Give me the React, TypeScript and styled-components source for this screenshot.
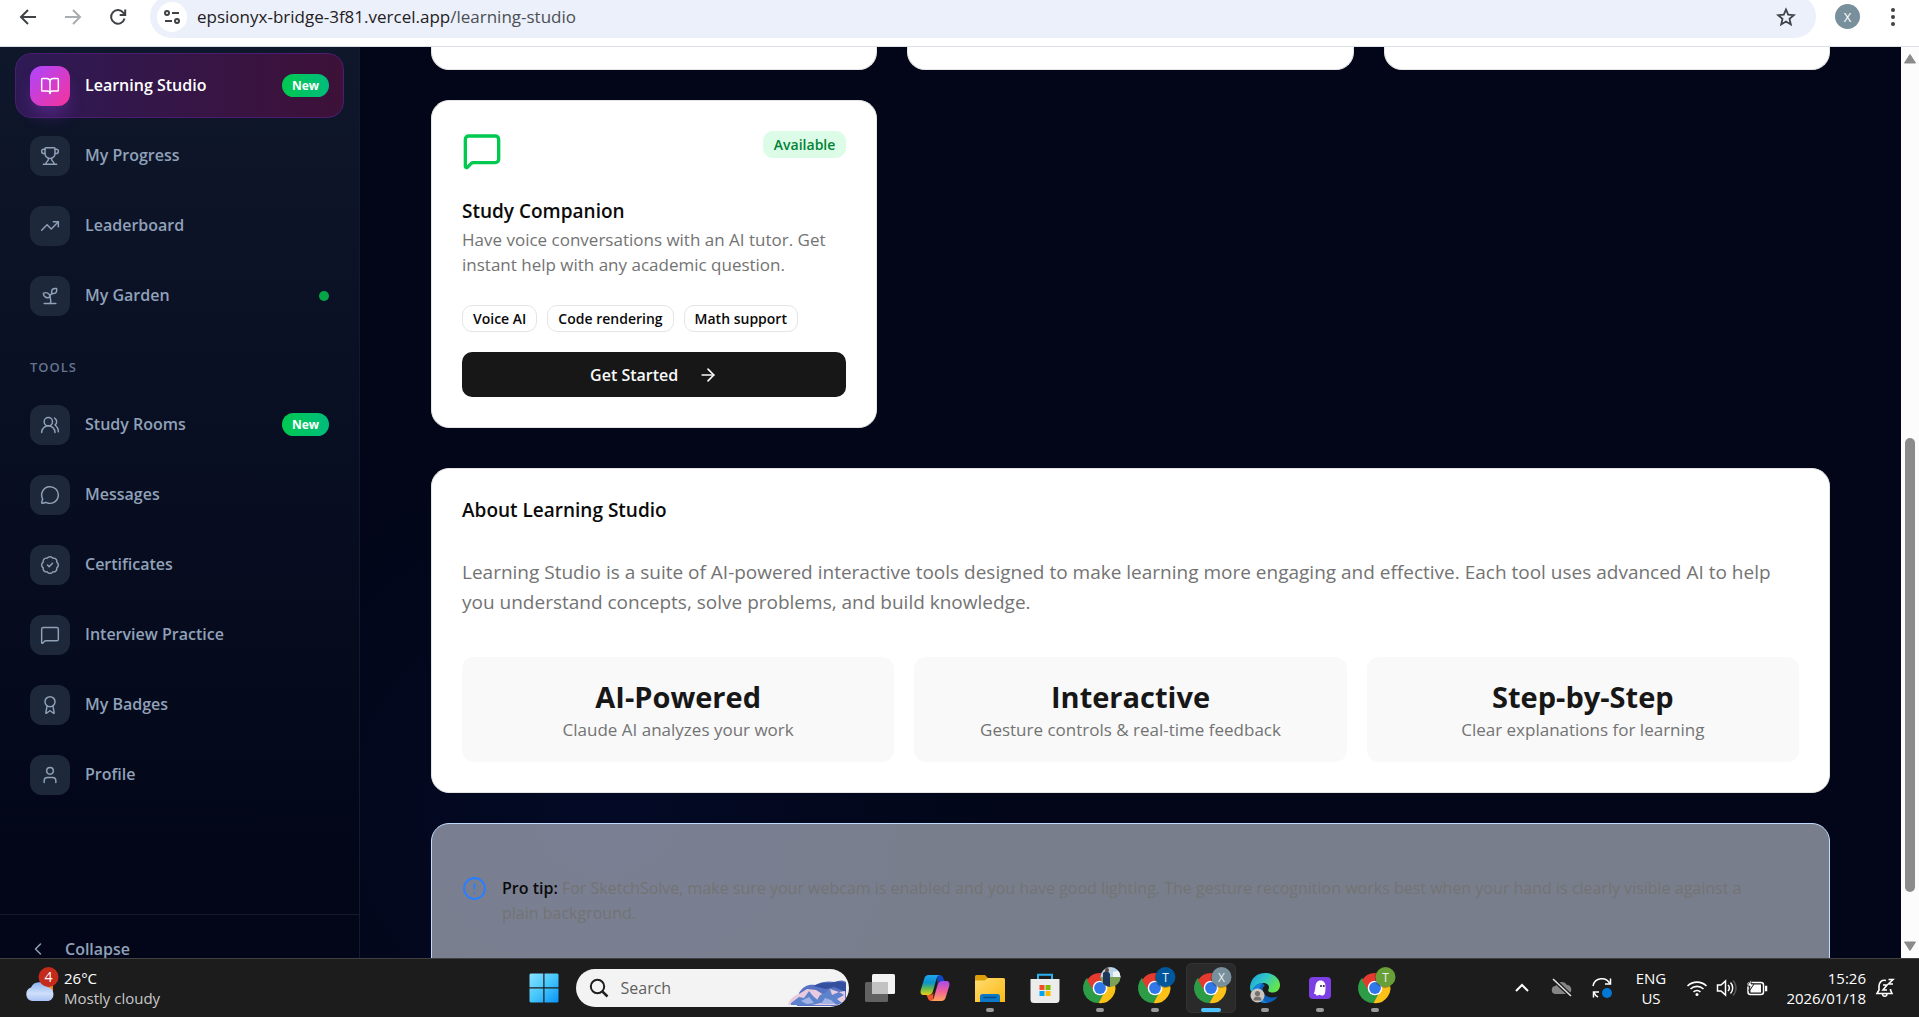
import React from "react";
import styled, { createGlobalStyle, css } from "styled-components";
import {
  ArrowRight,
  Award,
  BadgeCheck,
  BookOpen,
  ChevronLeft,
  CircleAlert,
  MessageCircle,
  MessageSquare,
  Sprout,
  TrendingUp,
  Trophy,
  User,
  UsersRound,
} from "lucide-react";

const GlobalStyle = createGlobalStyle`
  *, *::before, *::after { box-sizing: border-box; }
  body {
    margin: 0;
    font-family: "Segoe UI", "Open Sans", "Noto Sans", sans-serif;
    background: #020618;
  }
  button, input { font-family: inherit; }
  h2, h3, p, ul { margin: 0; padding: 0; }
  button { border: 0; padding: 0; background: none; color: inherit; cursor: pointer; }
`;

const Screen = styled.div`
  display: grid;
  grid-template-rows: auto minmax(0, 1fr) auto;
  height: 100vh;
  overflow: hidden;
`;

/* ---------- browser toolbar ---------- */

const Toolbar = styled.header`
  display: flex;
  align-items: flex-start;
  height: 47px;
  padding: 0 4px 0 14px;
  background: #fff;
  border-bottom: 1px solid #dcdfe3;
  overflow: hidden;
`;

const ToolbarButton = styled.button<{ $muted?: boolean }>`
  display: grid;
  place-items: center;
  flex: none;
  width: 45px;
  height: 33px;
  color: ${(p) => (p.$muted ? "#a9acb0" : "#3f4246")};
`;

const NavButtons = styled.div`
  display: flex;
  flex: none;
  width: 136px;
  margin-left: -9px;
`;

const Omnibox = styled.div`
  display: flex;
  align-items: center;
  flex: 1;
  height: 43px;
  margin: -5px 9px 0;
  padding: 0 14px 0 7px;
  border-radius: 22px;
  background: #ebf0fa;
`;

const SiteInfo = styled.button`
  display: grid;
  place-items: center;
  flex: none;
  width: 30px;
  height: 30px;
  border-radius: 50%;
  background: #fff;
  color: #3f4246;
`;

const Address = styled.p`
  flex: 1;
  margin-left: 10px;
  font-size: 17px;
  line-height: 24px;
  color: #1f2023;
  span { color: #4c4f54; }
`;

const StarButton = styled.button`
  display: grid;
  place-items: center;
  width: 32px;
  height: 32px;
  color: #3f4246;
`;

const Profile = styled.button`
  display: grid;
  place-items: center;
  width: 25px;
  height: 25px;
  margin: 4px 10px 0;
  border-radius: 50%;
  background: #78909c;
  color: #fff;
  font-size: 13px;
`;

/* ---------- page ---------- */

const Page = styled.div`
  display: grid;
  grid-template-columns: 360px minmax(0, 1fr) 18px;
  min-height: 0;
  overflow: hidden;
`;

const Sidebar = styled.aside`
  display: flex;
  flex-direction: column;
  min-height: 0;
  border-right: 1px solid #131a2b;
  background: linear-gradient(180deg, #0f172b 0%, #020618 90%);
`;

const Nav = styled.nav`
  flex: 1;
  min-height: 0;
  padding: 6px 15px 0;
`;

const NavList = styled.ul`
  display: flex;
  flex-direction: column;
  gap: 5px;
  list-style: none;
`;

const NavTile = styled.span<{ $active?: boolean }>`
  display: grid;
  place-items: center;
  flex: none;
  width: 40px;
  height: 40px;
  border-radius: 12px;
  background: #1d293b;
  ${(p) =>
    p.$active &&
    css`
      background: linear-gradient(135deg, #ad46ff, #f6339a);
      color: #fff;
      box-shadow: 0 12px 18px -4px rgba(173, 70, 255, 0.3);
    `}
`;

const NavLink = styled.a<{ $active?: boolean }>`
  display: flex;
  align-items: center;
  gap: 15px;
  height: 65px;
  padding: 0 14px;
  border: 1px solid transparent;
  border-radius: 16px;
  color: #90a1b9;
  font-size: 16px;
  font-weight: 600;
  line-height: 25px;
  text-decoration: none;
  ${(p) =>
    p.$active &&
    css`
      color: #fff;
      border-color: #4b1c6f;
      background: linear-gradient(90deg, #2e1a55, #3d1138);
    `}
`;

const NavLabel = styled.span`
  flex: 1;
`;

const NewBadge = styled.span`
  padding: 0 10px;
  border-radius: 12px;
  background: linear-gradient(90deg, #00c950, #00bc7d);
  color: #fff;
  font-size: 12px;
  font-weight: 700;
  line-height: 23px;
`;

const StatusDot = styled.span`
  width: 10px;
  height: 10px;
  border-radius: 50%;
  background: #06a548;
`;

const SectionLabel = styled.h2`
  padding: 29px 15px 15px;
  color: #62748e;
  font-size: 13px;
  font-weight: 600;
  line-height: 20px;
  letter-spacing: 1px;
`;

const SidebarFooter = styled.div`
  flex: none;
  height: 44px;
  padding: 14px 15px 0;
  border-top: 1px solid #131a2b;
  overflow: hidden;
`;

const CollapseButton = styled.button`
  display: flex;
  align-items: center;
  gap: 17px;
  height: 40px;
  padding-left: 13px;
  color: #90a1b9;
  font-size: 16px;
  font-weight: 600;
`;

const Main = styled.main`
  display: flex;
  flex-direction: column;
  min-height: 0;
  overflow: hidden;
  padding: 0 71px;
  background: radial-gradient(ellipse 400px 360px at 16% 84%, #040a26, #020618 100%);
`;

const CardGrid = styled.section`
  display: grid;
  flex: none;
  grid-template-columns: repeat(3, minmax(0, 1fr));
  gap: 30px;
`;

const CardEnd = styled.div`
  height: 23px;
  border: 1px solid #e5e5e5;
  border-top: 0;
  border-radius: 0 0 18px 18px;
  background: #fff;
`;

const Card = styled.article`
  flex: none;
  padding: 30px;
  border: 1px solid #e5e5e5;
  border-radius: 18px;
  background: #fff;
  color: #0a0a0a;
`;

const CardTop = styled.div`
  display: flex;
  align-items: flex-start;
  justify-content: space-between;
  margin-bottom: 29px;
  color: #00c950;
`;

const Badge = styled.span<{ $outline?: boolean }>`
  padding: 0 10px;
  border: 1px solid ${(p) => (p.$outline ? "#e5e5e5" : "#dcfce7")};
  border-radius: 10px;
  background: ${(p) => (p.$outline ? "#fff" : "#dcfce7")};
  color: ${(p) => (p.$outline ? "#0a0a0a" : "#008236")};
  font-size: 14px;
  font-weight: 600;
  line-height: 25px;
`;

const CardTitle = styled.h3`
  font-size: 19px;
  font-weight: 600;
  line-height: 22px;
`;

const CardText = styled.p`
  margin: 5px 0 28px;
  color: #737373;
  font-size: 17px;
  line-height: 25px;
`;

const TagRow = styled.div`
  display: flex;
  gap: 10px;
  margin-bottom: 20px;
`;

const PrimaryButton = styled.button`
  display: flex;
  align-items: center;
  justify-content: center;
  gap: 20px;
  width: 100%;
  height: 45px;
  border-radius: 10px;
  background: #171717;
  color: #fafafa;
  font-size: 16px;
  font-weight: 600;
`;

const About = styled(Card)`
  margin-top: 40px;
`;

const AboutText = styled.p`
  margin: 36px 0 40px;
  color: #737373;
  font-size: 19px;
  line-height: 30px;
`;

const FeatureGrid = styled.div`
  display: grid;
  grid-template-columns: repeat(3, minmax(0, 1fr));
  gap: 20px;
`;

const Feature = styled.div`
  padding: 20px;
  border-radius: 12px;
  background: #f9f9f9;
  text-align: center;
  h3 { color: #171717; font-size: 29px; font-weight: 700; line-height: 40px; }
  p { color: #737373; font-size: 17px; line-height: 25px; }
`;

const Tip = styled(Card)`
  display: flex;
  gap: 15px;
  height: 220px;
  margin-top: 30px;
  padding: 52px 60px 30px 30px;
  border-color: #bedbff;
  background: rgba(239, 246, 255, 0.5);
  svg { flex: none; color: #2b7fff; }
  p { color: #737373; font-size: 16px; line-height: 25px; }
  strong { color: #0a0a0a; font-weight: 600; }
`;

/* ---------- scrollbar ---------- */

const Scrollbar = styled.div`
  display: grid;
  grid-template-rows: 24px 367fr 454fr 42fr 24px;
  justify-items: center;
  background: #fcfcfc;
`;

const ScrollThumb = styled.div`
  grid-row: 3;
  width: 10px;
  border-radius: 5px;
  background: #8b8b8b;
`;

const ScrollArrow = styled.svg<{ $row: number }>`
  grid-row: ${(p) => p.$row};
  align-self: center;
`;

/* ---------- taskbar ---------- */

const Taskbar = styled.footer`
  display: grid;
  grid-template-columns: 1fr auto 1fr;
  align-items: stretch;
  height: 59px;
  border-top: 1px solid #404040;
  background: #1c1c1c;
  color: #fff;
`;

const Weather = styled.button`
  display: flex;
  align-items: center;
  justify-self: start;
  gap: 5px;
  padding-left: 23px;
  font-size: 15px;
  line-height: 20px;
  text-align: left;
  small { display: block; font-size: 15px; color: #c8c8c8; }
`;

const TaskCenter = styled.div`
  display: flex;
  align-items: center;
`;

const SearchBox = styled.label`
  display: flex;
  align-items: center;
  width: 273px;
  height: 38px;
  margin: 0 4px;
  padding: 0 2px 0 13px;
  border-radius: 19px;
  background: #f3f3f3;
  overflow: hidden;
  svg { flex: none; }
`;

const SearchInput = styled.input`
  flex: 1;
  min-width: 0;
  margin-left: 12px;
  padding: 0;
  border: 0;
  outline: 0;
  background: transparent;
  font-size: 16px;
  &::placeholder { color: #5f5f5f; opacity: 1; }
`;

const AppCell = styled.button<{ $active?: boolean }>`
  display: grid;
  grid-template-rows: 41px 4px;
  justify-items: center;
  align-items: center;
  width: ${(p) => (p.$active ? "50px" : "55px")};
  height: 50px;
  margin: ${(p) => (p.$active ? "0 2px 0 3px" : "0")};
  padding-top: 4px;
  border-radius: 6px;
  background: ${(p) => (p.$active ? "#2a2a2a" : "transparent")};
  box-shadow: ${(p) => (p.$active ? "inset 0 0 0 1px #333" : "none")};
`;

const Running = styled.span<{ $active?: boolean }>`
  width: ${(p) => (p.$active ? "20px" : "8px")};
  height: 4px;
  border-radius: 2px;
  background: ${(p) => (p.$active ? "#4cc2ff" : "#9a9a9a")};
`;

const Tray = styled.div`
  display: flex;
  align-items: center;
  justify-self: end;
  padding-right: 22px;
  font-size: 15px;
  line-height: 20px;
`;

const TrayButton = styled.button<{ $w: number }>`
  display: grid;
  place-items: center;
  width: ${(p) => p.$w}px;
  height: 48px;
`;

const Language = styled.div`
  width: 58px;
  text-align: center;
`;

const Clock = styled.div`
  width: 92px;
  margin-right: 6px;
  text-align: right;
`;

/* ---------- drawings ---------- */

const Chrome = ({ id, letter, color, photo }: { id: string; letter?: string; color?: string; photo?: boolean }) => (
  <svg width="42" height="42" viewBox="0 5 42 42">
    <path d="M8 15.8A15 15 0 0 0 19.5 41L27 30l-6-3.5-7.5-1z" fill="#2c9c47" />
    <path d="M34.4 18.8A15 15 0 0 1 19.5 41l7.5-13.5-1-8.7z" fill="#fcc116" />
    <path d="M8.1 18.3A15 15 0 0 1 34.1 18.8H21l-7 9z" fill="#e53a30" />
    <circle cx="21" cy="26" r="7.3" fill="#fff" />
    <circle cx="21" cy="26" r="5.9" fill="#3077ea" />
    {photo ? (
      <>
        <clipPath id={id}><circle cx="31.5" cy="15" r="10" /></clipPath>
        <g clipPath={`url(#${id})`}>
          <path d="M20 4h24v12H20z" fill="#b9d4e8" />
          <path d="M20 15h24v12H20z" fill="#7ba057" />
          <path d="M24 11l4-3 3 4 0 14h-7z" fill="#1e3658" />
          <circle cx="28" cy="8" r="2" fill="#6b4330" />
          <path d="M34 10l8-2v7h-8z" fill="#eef4f8" />
        </g>
      </>
    ) : (
      <>
        <circle cx="31" cy="15.7" r="10.3" fill="#1c1c1c" opacity=".35" />
        <circle cx="31.5" cy="15" r="10" fill={color} />
        <text x="31.5" y="19.5" fontSize="12" textAnchor="middle" fill="#e8eef2">{letter}</text>
      </>
    )}
  </svg>
);

const WindowsLogo = () => (
  <svg width="30" height="30" viewBox="0 0 30 30">
    <defs>
      <linearGradient id="win" x1="0" y1="0" x2="1" y2="1">
        <stop offset="0" stopColor="#8be2ff" />
        <stop offset=".5" stopColor="#45c6fb" />
        <stop offset="1" stopColor="#0a93f8" />
      </linearGradient>
    </defs>
    <path d="M1.5 .5H14.300V14.300H.5V1.500zM15.500 .5H28.500L29.500 1.500V14.300H15.500zM.5 15.500H14.300V29.500H1.500L.5 28.500zM15.500 15.500H29.500V28.500L28.500 29.500H15.500z" fill="url(#win)" />
  </svg>
);

const SearchArt = () => (
  <svg width="60" height="38" viewBox="0 0 60 38">
    <path d="M12 24C16 17 22 15 28 16c7-4 15-4 20-3 4-2 8-2 11 0v19l-6 5H10z" fill="#5873c4" />
    <path d="M26 17c6-3 12-4 17-3 5-2 10-2 16 0v9l-12-5-8 2z" fill="#334f9e" />
    <path d="M1 36c1-5 5-9 11-11l8-5 9 1 8 5 6-6 9 3 6-1v9l-5 5z" fill="#e9cbe0" />
    <path d="M4 34l8-6 5 1 5-7 4 5 8 7-9 2H4zM33 26l5-2 5-4 2 6 7-3 5 3-7 4 5 4-5 2-8-5-8 3-4-3z" fill="#5d83cc" />
    <path d="M14 32l8-4 5 6-7 1zM38 29l6 2 4 4H34z" fill="#a5b4e6" />
  </svg>
);

const TaskView = () => (
  <svg width="30" height="30" viewBox="0 0 30 30">
    <rect x="0" y="9" width="23" height="20" rx="1.500" fill="#626262" />
    <rect x="7" y="1" width="23" height="20" rx="1.500" fill="#f3f3f3" />
    <path d="M7 9h16v12H8.500A1.500 1.500 0 0 1 7 19.500z" fill="#c2c2c2" />
  </svg>
);

const Copilot = () => (
  <svg width="30" height="30" viewBox="0 0 30 30">
    <defs>
      <linearGradient id="cpA" x1="0" y1="0" x2="0" y2="1">
        <stop offset="0" stopColor="#1ea5ee" />
        <stop offset=".4" stopColor="#0c93c9" />
        <stop offset=".7" stopColor="#67bd4a" />
        <stop offset="1" stopColor="#f0cb1a" />
      </linearGradient>
      <linearGradient id="cpB" x1="0" y1="0" x2="0" y2="1">
        <stop offset="0" stopColor="#a64bf0" />
        <stop offset=".5" stopColor="#f0609a" />
        <stop offset="1" stopColor="#ffa25c" />
      </linearGradient>
    </defs>
    <path d="M17 2h3c1.500 0 2.500 1 3 2.500L24.500 8H21c-2 0-3 1-3.500 3z" fill="#1246c4" />
    <path d="M13 28h-2c-1.500 0-2.500-1-3-2.500L6.500 22H10c2 0 3-1 3.500-3z" fill="#f2562d" />
    <path d="M8.500 2H20c-2 0-2.800 1.500-3.400 3.500L13 18c-.8 2.700-2 4-4.500 4H4c-3 0-4-2-3.200-5L4.300 5.500C5 3.200 6.300 2 8.500 2z" fill="url(#cpA)" />
    <path d="M21.500 28H10.500c2 0 2.800-1.500 3.400-3.500L17.500 12c.8-2.700 2-4 4.500-4h4c3 0 4 2 3.200 5l-3.500 11.500c-.7 2.300-2 3.500-4.200 3.500z" fill="url(#cpB)" />
  </svg>
);

const Explorer = () => (
  <svg width="30" height="30" viewBox="0 0 30 30">
    <defs>
      <linearGradient id="fold" x1="0" y1="0" x2="1" y2="1">
        <stop offset="0" stopColor="#ffdd72" />
        <stop offset="1" stopColor="#fcb813" />
      </linearGradient>
    </defs>
    <path d="M0 3.500A1.500 1.500 0 0 1 1.500 2H10l3 3H29v8H0z" fill="#dd9f07" />
    <path d="M0 7.500h9.500L13 5h15.500A1.500 1.500 0 0 1 30 6.500V29H0z" fill="url(#fold)" />
    <path d="M5 29v-5.500A2.500 2.500 0 0 1 7.500 21h15a2.500 2.500 0 0 1 2.500 2.500V29z" fill="#0b78c8" />
    <path d="M8.500 24.500h13" stroke="#064b86" strokeWidth="1.500" />
  </svg>
);

const Store = () => (
  <svg width="30" height="30" viewBox="0 0 30 30">
    <path d="M8 7V1.800h14V7" fill="none" stroke="#2bb2ee" strokeWidth="2" />
    <path d="M0.500 6h29v20.500a3.500 3.500 0 0 1-3.500 3.500H4A3.500 3.500 0 0 1 .5 26.500z" fill="#ececec" />
    <path d="M9.500 12h5v5h-5z" fill="#f25022" />
    <path d="M15.500 12h5v5h-5z" fill="#7fba00" />
    <path d="M9.500 18h5v5h-5z" fill="#00a4ef" />
    <path d="M15.500 18h5v5h-5z" fill="#ffb900" />
  </svg>
);

const Edge = () => (
  <svg width="30" height="30" viewBox="0 0 30 30">
    <defs>
      <linearGradient id="edA" x1="0" y1="0" x2="1" y2=".5">
        <stop offset="0" stopColor="#18a0dc" />
        <stop offset=".5" stopColor="#30c5c9" />
        <stop offset="1" stopColor="#63e44d" />
      </linearGradient>
    </defs>
    <path d="M1 12C1 20 5 29 15 30c6 0 10-2.500 12.500-6.500C22 26 15 24 13 19c-1-3 0-5 2-6.500C11 8 3 8 1 12z" fill="#0c62b8" />
    <path d="M0 14C1 5 7 0 15 0c9 0 15 6 15 12 0 5-3.500 7.500-7.500 7.500-3.500 0-5-1-4-3 1.500-4-1-6.500-5.500-6.500-6 0-10 4-11 9C.5 18 0 16 0 14z" fill="url(#edA)" />
    <path d="M2 20c1-6 5-10 11-10-3 2.500-4.500 6-3 11 1 4 4 7.500 8 8.700C9.500 31 3.500 26 2 20z" fill="#1383dc" />
    <circle cx="7.500" cy="22.500" r="7" fill="#c9c5c1" />
    <circle cx="7.500" cy="20.500" r="2.600" fill="#77726e" />
    <path d="M3.500 27.500a4 4 0 0 1 8 0z" fill="#77726e" />
  </svg>
);

const Ghost = () => (
  <svg width="24" height="24" viewBox="0 0 24 24">
    <rect x="1" y="1" width="22" height="22" rx="4" fill="#7c3fe4" />
    <path d="M6 17c1-2 1-4 1.500-7C8 6 10 4.500 12.700 4.500c3 0 4.800 2.500 4.800 6 0 4 0 9-3 9-1.500 0-1.800-.8-3-.8-1 0-1.200.8-2.500.8S7.700 18.500 7.800 18C7 18.300 5.700 18 6 17z" fill="#fff" />
    <circle cx="13" cy="10" r="1" fill="#241344" />
    <circle cx="15.800" cy="10" r="1" fill="#241344" />
  </svg>
);

const WeatherIcon = () => (
  <svg width="36" height="42" viewBox="0 0 36 42">
    <defs>
      <linearGradient id="cloud" x1="0" y1="0" x2="0" y2="1">
        <stop offset="0" stopColor="#8fb4f2" />
        <stop offset=".6" stopColor="#cfdff9" />
        <stop offset="1" stopColor="#a7c3f4" />
      </linearGradient>
    </defs>
    <path d="M17 14h13v10H17z" fill="#f6821f" />
    <path d="M9 34a7 7 0 0 1-1-13.500A9 9 0 0 1 24 20a7.200 7.200 0 0 1 1.500 14z" fill="url(#cloud)" />
    <circle cx="25.500" cy="10" r="10" fill="#c42b1c" />
    <text x="25.500" y="15" fontSize="14" textAnchor="middle" fill="#fff">4</text>
  </svg>
);

const tools = [
  { label: "Study Rooms", Icon: UsersRound, badge: true },
  { label: "Messages", Icon: MessageCircle },
  { label: "Certificates", Icon: BadgeCheck },
  { label: "Interview Practice", Icon: MessageSquare },
  { label: "My Badges", Icon: Award },
  { label: "Profile", Icon: User },
];

const learning = [
  { label: "Learning Studio", Icon: BookOpen, badge: true, active: true },
  { label: "My Progress", Icon: Trophy },
  { label: "Leaderboard", Icon: TrendingUp },
  { label: "My Garden", Icon: Sprout, dot: true },
];

type Item = { label: string; Icon: React.ElementType; badge?: boolean; active?: boolean; dot?: boolean };

const NavItems = ({ items }: { items: Item[] }) => (
  <NavList>
    {items.map(({ label, Icon, badge, active, dot }) => (
      <li key={label}>
        <NavLink href="#" $active={active}>
          <NavTile $active={active}><Icon size={20} strokeWidth={1.75} /></NavTile>
          <NavLabel>{label}</NavLabel>
          {badge && <NewBadge>New</NewBadge>}
          {dot && <StatusDot />}
        </NavLink>
      </li>
    ))}
  </NavList>
);

const features = [
  ["AI-Powered", "Claude AI analyzes your work"],
  ["Interactive", "Gesture controls & real-time feedback"],
  ["Step-by-Step", "Clear explanations for learning"],
];

export default function App() {
  return (
    <Screen>
      <GlobalStyle />
      <Toolbar>
        <NavButtons>
          <ToolbarButton aria-label="Back">
            <svg width="18" height="18" viewBox="0 0 18 18" fill="none" stroke="currentColor" strokeWidth="2"><path d="M17 9H2.500M9 2L2 9l7 7" /></svg>
          </ToolbarButton>
          <ToolbarButton aria-label="Forward" $muted>
            <svg width="18" height="18" viewBox="0 0 18 18" fill="none" stroke="currentColor" strokeWidth="2"><path d="M1 9h14.500M9 2l7 7-7 7" /></svg>
          </ToolbarButton>
          <ToolbarButton aria-label="Reload">
            <svg width="18" height="18" viewBox="0 0 18 18" fill="none" stroke="currentColor" strokeWidth="2"><path d="M15.500 10.500A6.800 6.800 0 1 1 14.500 5l1.500 2M16.200 1.500V7h-5.500" /></svg>
          </ToolbarButton>
        </NavButtons>
        <Omnibox>
          <SiteInfo aria-label="View site information">
            <svg width="18" height="18" viewBox="0 0 18 18" fill="none" stroke="currentColor" strokeWidth="2"><circle cx="4" cy="5" r="2" /><path d="M9 5h7M2 13h7" /><circle cx="14" cy="13" r="2" /></svg>
          </SiteInfo>
          <Address>epsionyx-bridge-3f81.vercel.app<span>/learning-studio</span></Address>
          <StarButton aria-label="Bookmark">
            <svg width="20" height="20" viewBox="0 0 20 20" fill="none" stroke="currentColor" strokeWidth="1.800"><path d="M10 2.500l2.200 5.200 5.600.5-4.300 3.700 1.300 5.500-4.800-2.900-4.800 2.900 1.300-5.500-4.300-3.700 5.600-.5z" /></svg>
          </StarButton>
        </Omnibox>
        <Profile>X</Profile>
        <ToolbarButton aria-label="Menu">
          <svg width="6" height="20" viewBox="0 0 6 20" fill="currentColor"><circle cx="3" cy="3" r="2" /><circle cx="3" cy="10" r="2" /><circle cx="3" cy="17" r="2" /></svg>
        </ToolbarButton>
      </Toolbar>

      <Page>
        <Sidebar>
          <Nav>
            <NavItems items={learning} />
            <SectionLabel>TOOLS</SectionLabel>
            <NavItems items={tools} />
          </Nav>
          <SidebarFooter>
            <CollapseButton><ChevronLeft size={20} strokeWidth={1.75} />Collapse</CollapseButton>
          </SidebarFooter>
        </Sidebar>

        <Main>
          <CardGrid>
            <CardEnd />
            <CardEnd />
            <CardEnd />
            <Card>
              <CardTop>
                <MessageSquare size={40} />
                <Badge>Available</Badge>
              </CardTop>
              <CardTitle>Study Companion</CardTitle>
              <CardText>Have voice conversations with an AI tutor. Get instant help with any academic question.</CardText>
              <TagRow>
                <Badge $outline>Voice AI</Badge>
                <Badge $outline>Code rendering</Badge>
                <Badge $outline>Math support</Badge>
              </TagRow>
              <PrimaryButton>Get Started<ArrowRight size={20} /></PrimaryButton>
            </Card>
          </CardGrid>

          <About>
            <CardTitle>About Learning Studio</CardTitle>
            <AboutText>
              Learning Studio is a suite of AI-powered interactive tools designed to make learning more engaging and effective. Each tool uses advanced AI to help you understand concepts, solve problems, and build knowledge.
            </AboutText>
            <FeatureGrid>
              {features.map(([title, text]) => (
                <Feature key={title}>
                  <h3>{title}</h3>
                  <p>{text}</p>
                </Feature>
              ))}
            </FeatureGrid>
          </About>

          <Tip>
            <CircleAlert size={25} />
            <p>
              <strong>Pro tip:</strong> For SketchSolve, make sure your webcam is enabled and you have good lighting. The gesture recognition works best when your hand is clearly visible against a plain background.
            </p>
          </Tip>
        </Main>

        <Scrollbar>
          <ScrollArrow $row={1} width="14" height="12" viewBox="0 0 14 12"><path d="M7 1.500L12.500 10h-11z" fill="#8b8b8b" stroke="#8b8b8b" strokeLinejoin="round" /></ScrollArrow>
          <ScrollThumb />
          <ScrollArrow $row={5} width="14" height="12" viewBox="0 0 14 12"><path d="M7 10.500L12.500 2h-11z" fill="#8b8b8b" stroke="#8b8b8b" strokeLinejoin="round" /></ScrollArrow>
        </Scrollbar>
      </Page>

      <Taskbar>
        <Weather>
          <WeatherIcon />
          <span>26°C<small>Mostly cloudy</small></span>
        </Weather>
        <TaskCenter>
          <AppCell aria-label="Start"><WindowsLogo /></AppCell>
          <SearchBox>
            <svg width="20" height="20" viewBox="0 0 20 20" fill="none" stroke="#1f1f1f" strokeWidth="2"><circle cx="8.500" cy="8.500" r="6.700" /><path d="M13.300 13.300l5.200 5.200" strokeWidth="2.500" /></svg>
            <SearchInput aria-label="Search" placeholder="Search" />
            <SearchArt />
          </SearchBox>
          <AppCell aria-label="Task view"><TaskView /></AppCell>
          <AppCell aria-label="Copilot"><Copilot /></AppCell>
          <AppCell aria-label="File Explorer"><Explorer /><Running /></AppCell>
          <AppCell aria-label="Microsoft Store"><Store /></AppCell>
          <AppCell><Chrome id="c1" photo /><Running /></AppCell>
          <AppCell><Chrome id="c2" letter="T" color="#01579b" /><Running /></AppCell>
          <AppCell $active><Chrome id="c3" letter="X" color="#78909c" /><Running $active /></AppCell>
          <AppCell aria-label="Edge"><Edge /><Running /></AppCell>
          <AppCell aria-label="Ghost"><Ghost /><Running /></AppCell>
          <AppCell><Chrome id="c4" letter="T" color="#689f38" /><Running /></AppCell>
        </TaskCenter>
        <Tray>
          <TrayButton $w={40} aria-label="Show hidden icons">
            <svg width="16" height="10" viewBox="0 0 16 10" fill="none" stroke="#fff" strokeWidth="2"><path d="M2 8l6-6 6 6" /></svg>
          </TrayButton>
          <TrayButton $w={40} aria-label="OneDrive">
            <svg width="22" height="20" viewBox="0 0 22 20"><path d="M5 16a4 4 0 0 1-.5-8A6.500 6.500 0 0 1 16 7a4.600 4.600 0 0 1 1 9z" fill="#858585" /><path d="M2 1l18 17" stroke="#1c1c1c" strokeWidth="4" /><path d="M2 1l18 17" stroke="#e6e6e6" strokeWidth="1.500" /></svg>
          </TrayButton>
          <TrayButton $w={40} aria-label="Updates">
            <svg width="22" height="22" viewBox="0 0 22 22" fill="none" stroke="#fff" strokeWidth="1.500"><path d="M2 9a9 9 0 0 1 17-2M19.500 1.500V7H14M7 20a9 9 0 0 1-4-4.500M2.500 20.500V15H8" /><circle cx="16" cy="16" r="5" fill="#0078d4" stroke="none" /></svg>
          </TrayButton>
          <Language>ENG<br />US</Language>
          <TrayButton $w={34} aria-label="Wi-Fi">
            <svg width="22" height="18" viewBox="0 0 22 18" fill="none" stroke="#fff" strokeWidth="1.600"><path d="M1.500 7a13.500 13.500 0 0 1 19 0M4.500 10a9.300 9.300 0 0 1 13 0M7.500 13a5 5 0 0 1 7 0" /><circle cx="11" cy="15.500" r="1.500" fill="#fff" stroke="none" /></svg>
          </TrayButton>
          <TrayButton $w={26} aria-label="Volume">
            <svg width="22" height="18" viewBox="0 0 22 18" fill="none" stroke="#fff" strokeWidth="1.500"><path d="M1.500 6H5l4.500-4v14L5 12H1.500z" /><path d="M12 6a4 4 0 0 1 0 6M14.500 3.500a8 8 0 0 1 0 11" /><path d="M17 1.500a11 11 0 0 1 0 15" stroke="#555" /></svg>
          </TrayButton>
          <TrayButton $w={34} aria-label="Battery">
            <svg width="22" height="18" viewBox="0 0 22 18" fill="none" stroke="#fff" strokeWidth="1.500"><rect x="2" y="3.500" width="15.500" height="12" rx="2.500" /><path d="M4.500 13.500V11L8 5.500h7v8z" fill="#fff" stroke="none" /><path d="M19 7.500h1.500v4H19" fill="#fff" /><path d="M5.500 0L1 7h3l-1 5 5-7H5z" fill="#fff" stroke="#1c1c1c" strokeWidth=".800" /></svg>
          </TrayButton>
          <Clock>15:26<br />2026/01/18</Clock>
          <TrayButton $w={25} aria-label="Notifications">
            <svg width="20" height="20" viewBox="0 0 20 20" fill="none" stroke="#fff" strokeWidth="1.600"><path d="M11 2.500C6.500 1.500 4 4.500 4 8v4l-2 3.500h15L15.500 12v-1M7.500 16c.3 3 4.200 3 4.500 0" /><path d="M13.500 1.500h4.500l-4.500 4.500h4.500M8 7h4l-4 5h4" /></svg>
          </TrayButton>
        </Tray>
      </Taskbar>
    </Screen>
  );
}
